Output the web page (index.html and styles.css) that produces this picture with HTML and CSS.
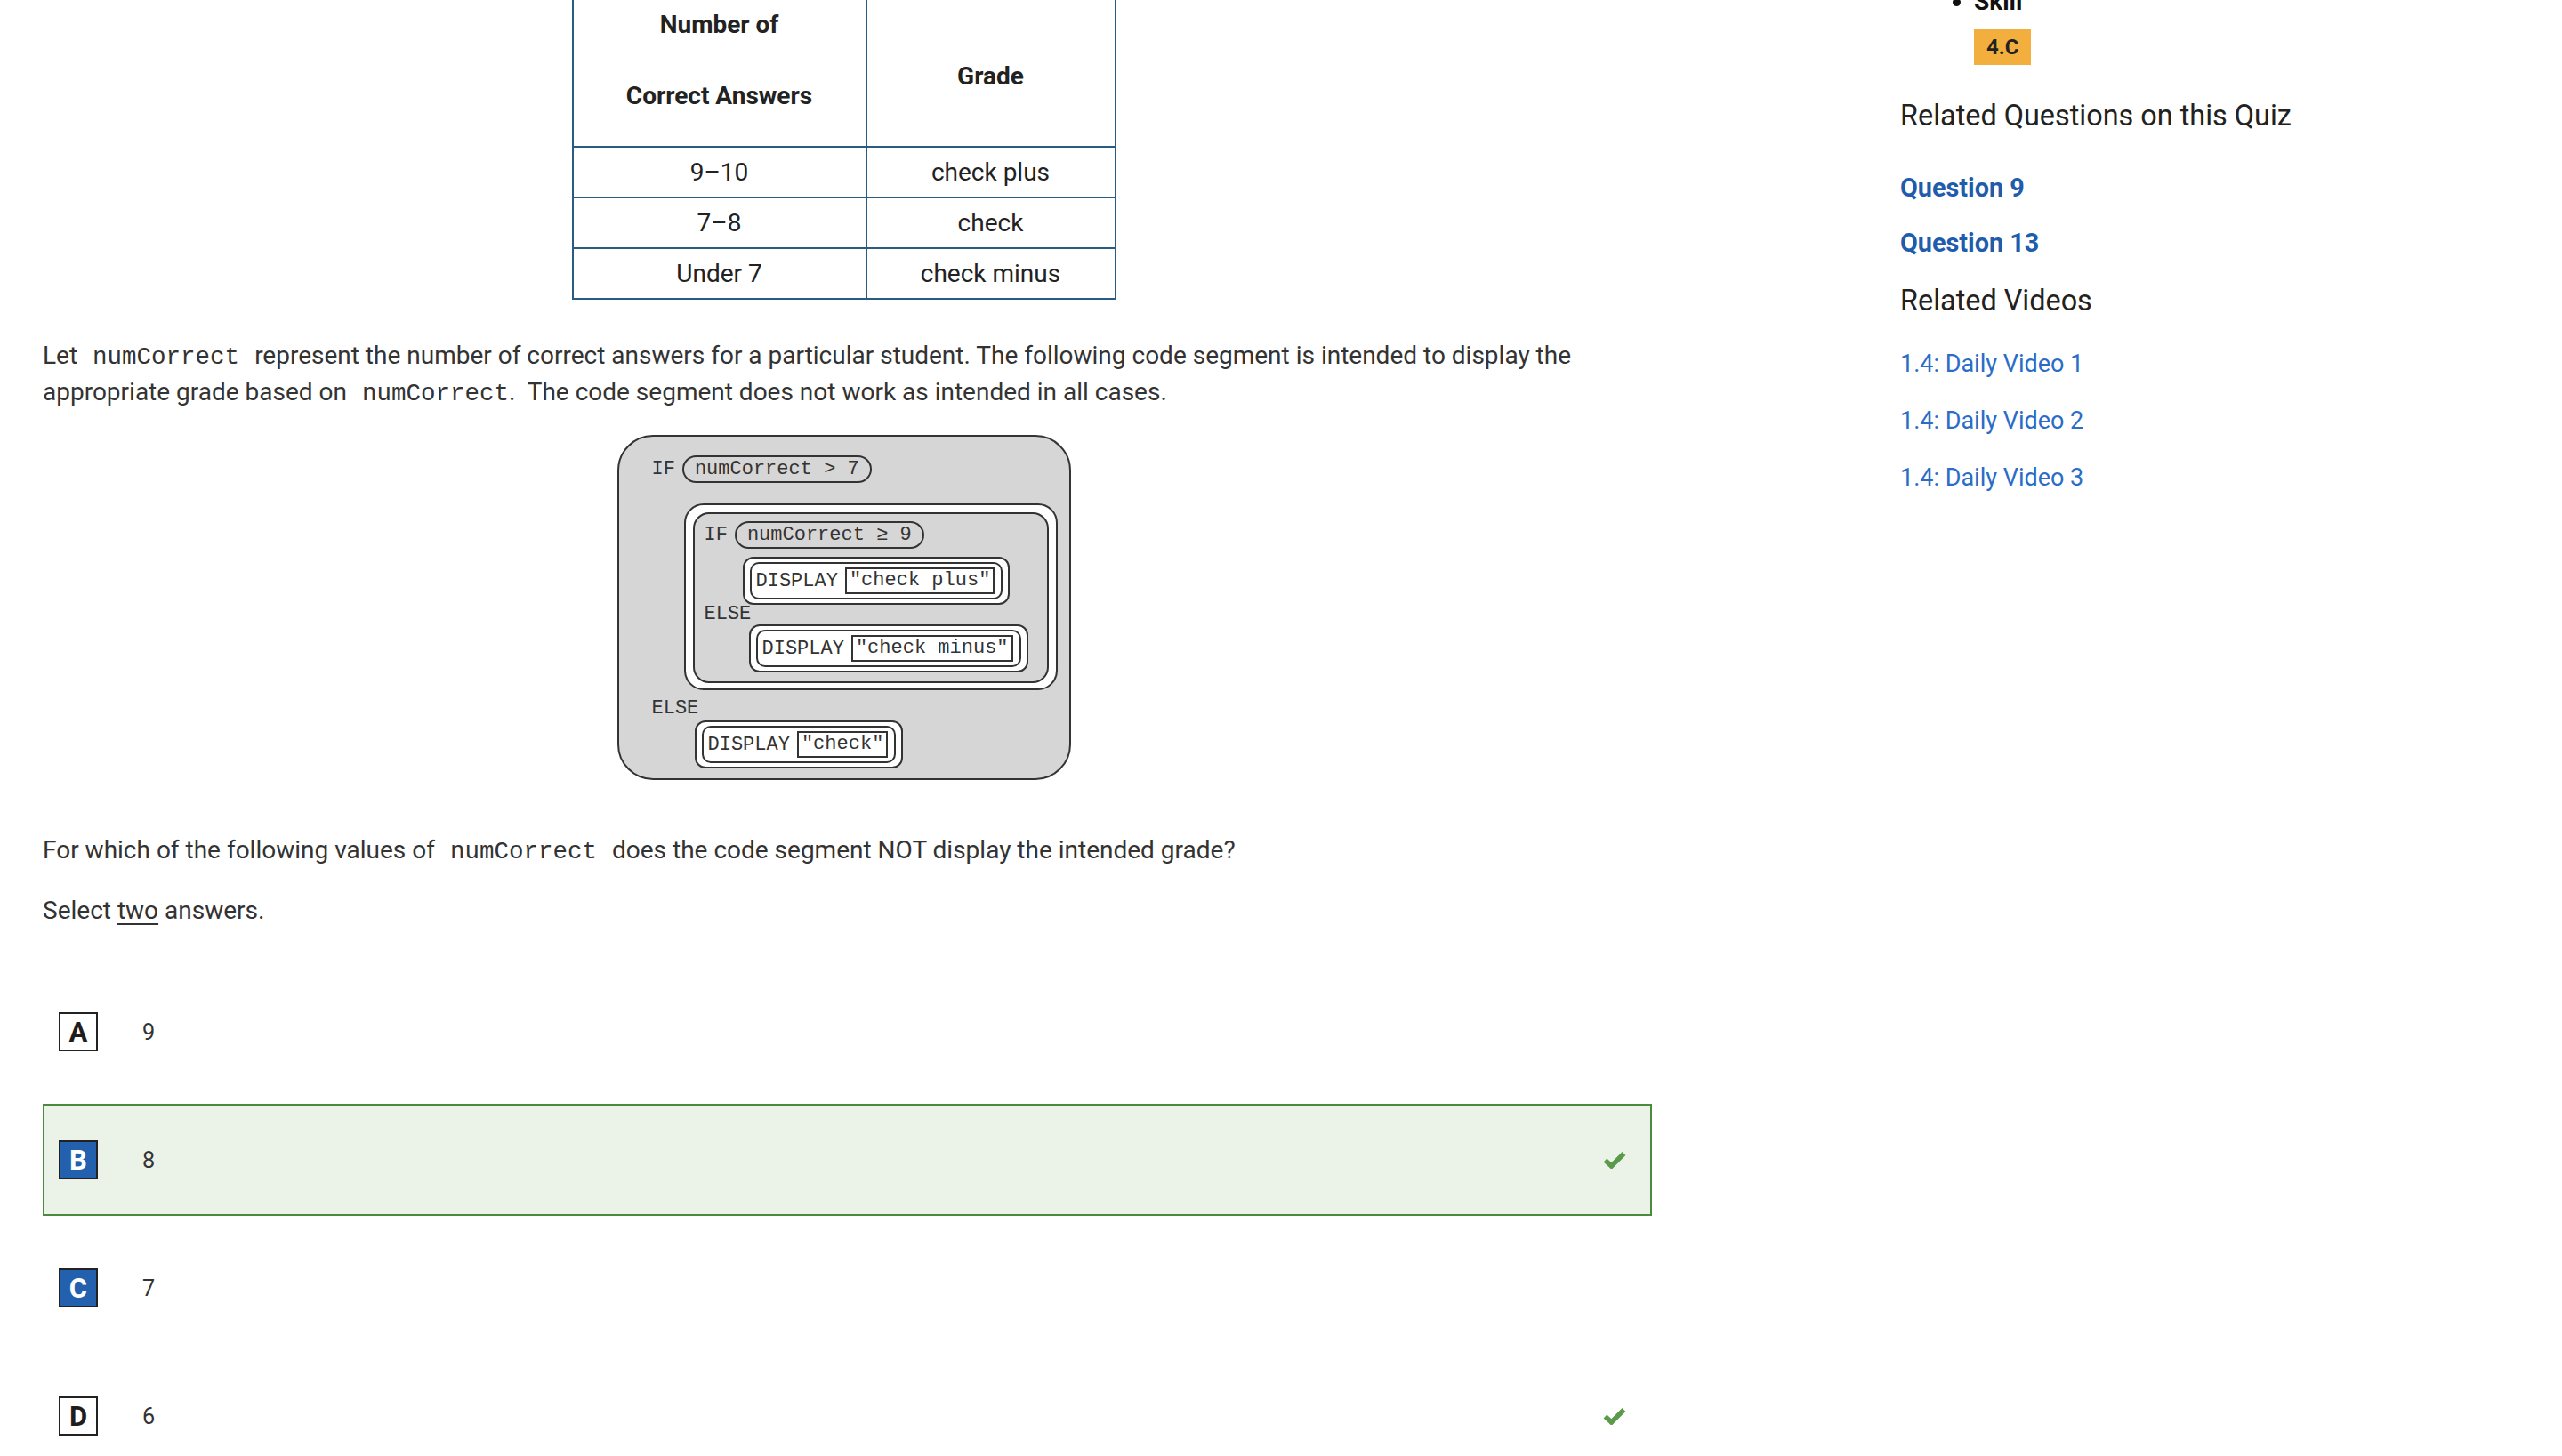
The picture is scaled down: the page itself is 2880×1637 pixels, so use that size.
FILE: index.html
```html
<!DOCTYPE html>
<html lang="en">
<head>
<meta charset="utf-8">
<title>Question</title>
<link rel="stylesheet" href="styles.css">
</head>
<body>
<div class="page">
  <main class="main">
    <table class="grades">
      <colgroup><col class="col1"><col class="col2"></colgroup>
      <thead>
        <tr>
          <th class="c1"><p>Number of</p><p class="last">Correct Answers</p></th>
          <th class="c2">Grade</th>
        </tr>
      </thead>
      <tbody>
        <tr><td>9–10</td><td>check plus</td></tr>
        <tr><td>7–8</td><td>check</td></tr>
        <tr><td>Under 7</td><td>check minus</td></tr>
      </tbody>
    </table>

    <p class="txt p1">Let<code class="code">numCorrect</code>represent the number of correct answers for a particular student. The following code segment is intended to display the appropriate grade based on<code class="code tight">numCorrect</code>.&nbsp; The code segment does not work as intended in all cases.</p>

    <div class="diagram">
      <div class="cond-line"><span>IF</span><span class="pill">numCorrect &gt; 7</span></div>
      <div class="ifring">
        <div class="ifinner">
          <div class="cond-line"><span>IF</span><span class="pill">numCorrect ≥ 9</span></div>
          <div class="disp d1"><div class="disp-in"><span>DISPLAY</span><span class="str">"check plus"</span></div></div>
          <div class="else">ELSE</div>
          <div class="disp d2"><div class="disp-in"><span>DISPLAY</span><span class="str">"check minus"</span></div></div>
        </div>
      </div>
      <div class="else outer-else">ELSE</div>
      <div class="disp d3"><div class="disp-in"><span>DISPLAY</span><span class="str">"check"</span></div></div>
    </div>

    <p class="txt p2">For which of the following values of<code class="code">numCorrect</code>does the code segment NOT display the intended grade?</p>
    <p class="txt p3">Select <span class="u">two</span> answers.</p>

    <div class="choices">
      <div class="choice">
        <span class="letter">A</span><span class="val">9</span>
      </div>
      <div class="choice correct">
        <span class="letter sel">B</span><span class="val">8</span>
        <svg class="check" viewBox="0 0 26 20" aria-hidden="true"><polyline points="2.5,10.5 9.5,17 23.5,3" fill="none" stroke="#5b9a4a" stroke-width="5.5"/></svg>
      </div>
      <div class="choice">
        <span class="letter sel">C</span><span class="val">7</span>
      </div>
      <div class="choice">
        <span class="letter">D</span><span class="val">6</span>
        <svg class="check" viewBox="0 0 26 20" aria-hidden="true"><polyline points="2.5,10.5 9.5,17 23.5,3" fill="none" stroke="#5b9a4a" stroke-width="5.5"/></svg>
      </div>
    </div>
  </main>

  <aside class="side">
    <ul class="skills">
      <li>Skill
        <div class="badgewrap"><span class="badge">4.C</span></div>
      </li>
    </ul>
    <h3 class="side-h h-q">Related Questions on this Quiz</h3>
    <div class="links qlinks">
      <a class="qlink">Question 9</a>
      <a class="qlink">Question 13</a>
    </div>
    <h3 class="side-h h-v">Related Videos</h3>
    <div class="links vlinks">
      <a class="vlink">1.4: Daily Video 1</a>
      <a class="vlink">1.4: Daily Video 2</a>
      <a class="vlink">1.4: Daily Video 3</a>
    </div>
  </aside>
</div>
</body>
</html>
```

FILE: styles.css
```css
html, body {
  margin: 0;
  padding: 0;
  background: #fff;
}
body {
  font-family: Roboto, "Liberation Sans", Arial, sans-serif;
  color: #333;
  width: 2880px;
  overflow: hidden;
}
.page {
  display: flex;
  align-items: flex-start;
}
.main {
  margin-left: 48px;
  width: 1809px;
  flex: none;
}

/* table */
.grades {
  border-collapse: collapse;
  table-layout: fixed;
  margin: -2px auto 0;
  width: 610px;
  font-size: 28px;
  color: #222;
  position: relative;
  left: -4px;
}
.grades .col1 { width: 330px; }
.grades .col2 { width: 280px; }
.grades th, .grades td {
  border: 2px solid #2a5b80;
  text-align: center;
  line-height: 41px;
}
.grades th {
  font-weight: 700;
  padding: 7px 8px 0;
  vertical-align: middle;
}
.grades th p { margin: 0; }
.grades th p.last { margin-top: 39px; margin-bottom: 36px; }
.grades td {
  padding: 7px 8px;
}

/* text */
.txt {
  margin: 0;
  font-size: 28px;
  line-height: 41px;
  color: #333;
}
.p1 { margin-top: 42px; }
.p2 { margin-top: 58px; }
.p3 { margin-top: 27px; }
.code {
  font-family: "Liberation Mono", "Courier New", monospace;
  font-size: 27.5px;
  line-height: 1;
  margin: 0 17px;
}
.code.tight { margin-right: 0; }
.u {
  text-decoration: underline;
  text-decoration-thickness: 2px;
  text-underline-offset: 5px;
}

/* diagram */
.diagram {
  box-sizing: border-box;
  width: 510px;
  margin: 28px auto 0;
  position: relative;
  left: -4px;
  border: 2px solid #333;
  border-radius: 40px;
  background: #d6d6d6;
  padding: 21px 13px 11px 37px;
  font-family: "Liberation Mono", "Courier New", monospace;
  font-size: 22px;
  color: #333;
}
.cond-line {
  display: flex;
  align-items: center;
  gap: 8px;
}
.pill {
  border: 2px solid #333;
  border-radius: 16px;
  padding: 0 12px;
  line-height: 27px;
}
.ifring {
  margin: 23px 0 0 36px;
  border: 2px solid #333;
  border-radius: 22px;
  background: #fff;
  padding: 8px 8px 6px;
}
.ifinner {
  border: 2px solid #333;
  border-radius: 18px;
  background: #d6d6d6;
  padding: 8px 10px 10px 11px;
}
.disp {
  display: flex;
  width: fit-content;
  border: 2px solid #333;
  border-radius: 12px;
  background: #fff;
  padding: 4px 6px;
}
.disp-in {
  display: flex;
  align-items: center;
  gap: 8px;
  border: 2px solid #333;
  border-radius: 10px;
  padding: 4px 7px 4px 5px;
}
.str {
  border: 2px solid #333;
  padding: 0 3px;
  line-height: 26px;
}
.d1 { margin: 9px 0 0 43px; }
.else { line-height: 22px; }
.d2 { margin-left: 50px; }
.outer-else { margin-top: 9px; line-height: 23px; }
.d3 { margin: 2px 0 0 48px; }

/* choices */
.choices { margin-top: 53px; }
.choice {
  display: flex;
  align-items: center;
  border: 2px solid transparent;
  padding: 39px 16px;
  margin-bottom: 18px;
}
.choice.correct {
  border-color: #4b8a3e;
  background: #ebf3e9;
}
.letter {
  box-sizing: border-box;
  width: 44px;
  height: 44px;
  border: 2px solid #222;
  display: flex;
  align-items: center;
  justify-content: center;
  font-weight: 700;
  font-size: 31px;
  color: #1e1e1e;
  background: #fff;
  flex: none;
}
.letter.sel {
  background: #2360ad;
  color: #fff;
}
.val {
  margin-left: 50px;
  font-size: 25.2px;
  color: #333;
}
.check {
  margin-left: auto;
  margin-right: 11px;
  width: 26px;
  height: 20px;
}

/* sidebar */
.side {
  margin-left: 279px;
  margin-top: -15px;
  width: 520px;
  flex: none;
  color: #222;
}
.skills {
  margin: 0;
  padding-left: 83px;
  font-weight: 700;
  font-size: 28px;
  line-height: 34.56px;
  color: #111;
}
.badgewrap {
  display: flex;
  margin-top: 13px;
}
.badge {
  background: #f3af3d;
  font-weight: 700;
  font-size: 24px;
  line-height: 40px;
  padding: 0 14px;
  color: #222;
}
.side-h {
  margin: 0;
  font-weight: 400;
  font-size: 32.4px;
  line-height: 38.88px;
  color: #222;
}
.h-q { margin-top: 38px; }
.h-v { margin-top: 28px; }
.links {
  display: flex;
  flex-direction: column;
  align-items: flex-start;
}
.qlinks { margin-top: 45px; gap: 27px; }
.vlinks { margin-top: 35px; gap: 29px; }
.qlink {
  font-size: 28.8px;
  line-height: 34.56px;
  font-weight: 700;
  color: #1f5cab;
}
.vlink {
  font-size: 27px;
  line-height: 34.56px;
  font-weight: 400;
  color: #2b6dc6;
}
```
